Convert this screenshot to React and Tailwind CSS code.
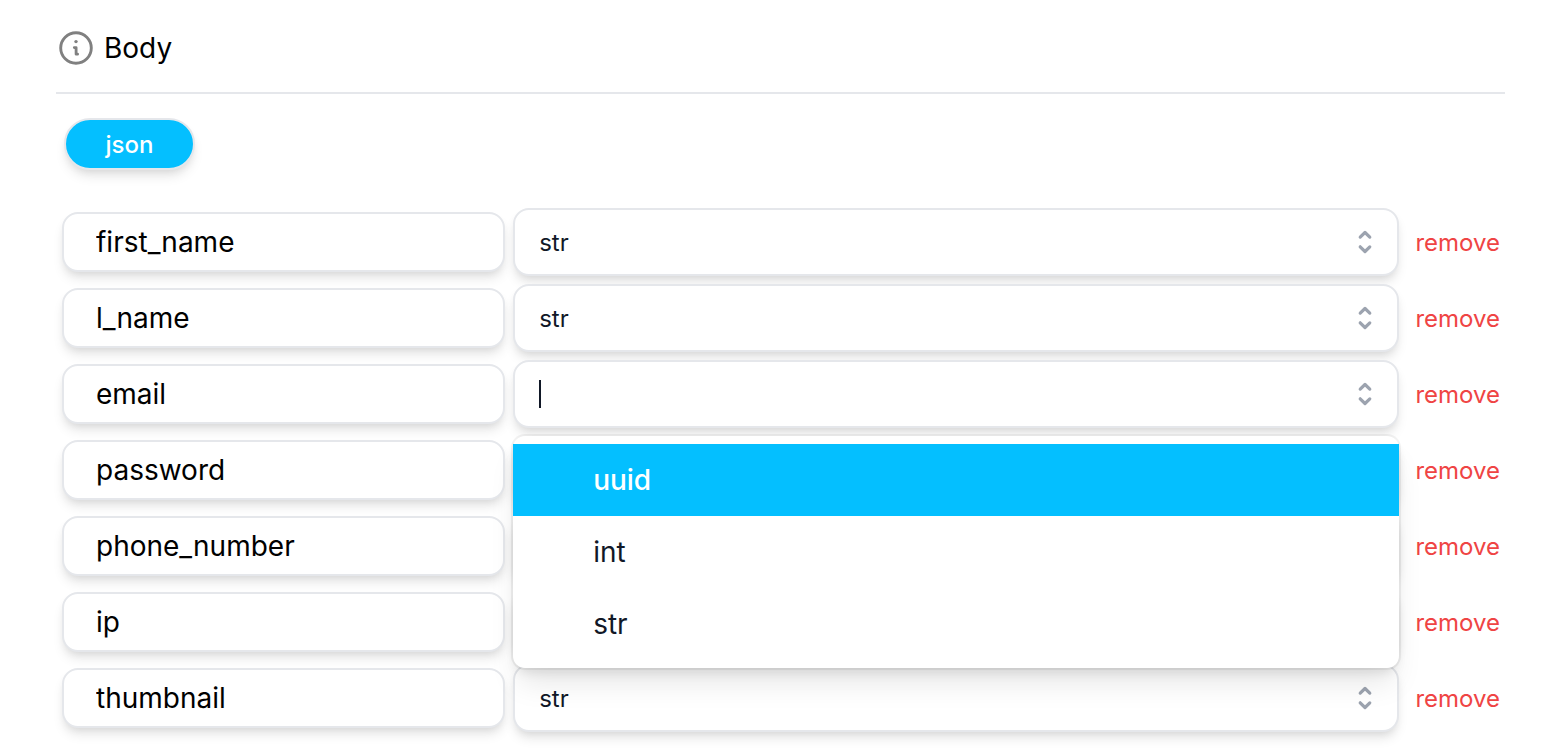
import { useState } from "react";

const FIELDS = [
  { name: "first_name", type: "str" },
  { name: "l_name", type: "str" },
  { name: "email", type: "", open: true },
  { name: "password", type: "str" },
  { name: "phone_number", type: "str" },
  { name: "ip", type: "str" },
  { name: "thumbnail", type: "str" },
];

const TYPES = ["uuid", "int", "str"];

const CARD_SHADOW =
  "shadow-[0_8px_12px_-2px_rgba(0,0,0,0.1),0_4px_8px_-4px_rgba(0,0,0,0.1)]";

function InfoIcon() {
  return (
    <svg viewBox="0 0 34 34" className="size-[34px]" fill="none" stroke="#808080" aria-hidden="true">
      <circle cx="17" cy="17" r="15.3" strokeWidth="2.9" />
      <path d="M15.3 16.6H17.1v6.6H18.6" strokeWidth="2.8" strokeLinecap="round" strokeLinejoin="round" />
      <circle cx="17" cy="10.6" r="1.7" fill="#808080" stroke="none" />
    </svg>
  );
}

function SelectorIcon() {
  return (
    <svg viewBox="0 0 20 20" className="size-8" fill="#9ca3af" aria-hidden="true">
      <path
        fillRule="evenodd"
        clipRule="evenodd"
        d="M10 3a1 1 0 01.707.293l3 3a1 1 0 01-1.414 1.414L10 5.414 7.707 7.707a1 1 0 01-1.414-1.414l3-3A1 1 0 0110 3zm-3.707 9.293a1 1 0 011.414 0L10 14.586l2.293-2.293a1 1 0 011.414 1.414l-3 3a1 1 0 01-1.414 0l-3-3a1 1 0 010-1.414z"
      />
    </svg>
  );
}

function TypeOptions({ id }) {
  const [active, setActive] = useState("uuid");
  return (
    <ul
      id={id}
      role="listbox"
      className="absolute inset-x-0 top-full z-10 mt-2 rounded-xl bg-white py-2 shadow-[0_0_0_2px_rgba(0,0,0,0.05),0_20px_30px_-6px_rgba(0,0,0,0.1),0_8px_12px_-4px_rgba(0,0,0,0.1)]"
    >
      {TYPES.map((type) => (
        <li
          key={type}
          role="option"
          aria-selected={type === active}
          onMouseEnter={() => setActive(type)}
          className={
            type === active
              ? "bg-[#04bfff] py-4 pr-8 pl-20 text-[28px] leading-10 font-medium text-white"
              : "py-4 pr-8 pl-20 text-[28px] leading-10 text-[#111827]"
          }
        >
          {type}
        </li>
      ))}
    </ul>
  );
}

function TypeBox({ field }) {
  const listId = `${field.name}-types`;
  return (
    <div className="relative min-w-0">
      <div className={`flex h-[68px] items-center rounded-2xl border-2 border-[#e5e7eb] bg-white pr-4 pl-6 ${CARD_SHADOW}`}>
        {field.open && <span className="h-7 w-[2px] bg-[#111827]" aria-hidden="true" />}
        <input
          role="combobox"
          aria-label={`${field.name} type`}
          aria-expanded={Boolean(field.open)}
          aria-controls={listId}
          defaultValue={field.type}
          className="min-w-0 flex-1 bg-transparent pt-[2px] text-2xl leading-10 text-[#111827] outline-none"
        />
        <button type="button" aria-label={`Show types for ${field.name}`}>
          <SelectorIcon />
        </button>
      </div>
      {field.open && <TypeOptions id={listId} />}
    </div>
  );
}

export default function App() {
  return (
    <main className="bg-white pt-6 pr-[51px] pb-4 pl-14 font-['Inter',sans-serif] text-black">
      <header className="flex h-[70px] items-start gap-[11px] border-b-2 border-[#e5e7eb] pt-[7px] pl-[3px]">
        <InfoIcon />
        <h2 className="text-[28px] leading-[34px]">Body</h2>
      </header>
      <div className="pt-6 pl-2">
        <button
          type="button"
          className={`h-[52px] w-[131px] rounded-full border-2 border-[#e5e7eb] bg-[#04bfff] pt-[2px] text-2xl font-medium text-white ${CARD_SHADOW}`}
        >
          json
        </button>
      </div>
      <form className="flex flex-col gap-2 pt-[38px] pr-[5px] pl-[6px]">
        {FIELDS.map((field) => (
          <div key={field.name} className="flex items-center">
            <div className="grid min-w-0 flex-1 grid-cols-[minmax(0,1fr)_minmax(0,2fr)] items-center gap-2">
              <input
                aria-label="Field name"
                defaultValue={field.name}
                className={`h-[60px] w-full min-w-0 rounded-2xl border-2 border-[#e5e7eb] bg-white px-8 text-[28px] outline-none ${CARD_SHADOW}`}
              />
              <TypeBox field={field} />
            </div>
            <button type="button" className="ml-4 pt-[2px] text-2xl text-[#ef4444]">
              remove
            </button>
          </div>
        ))}
      </form>
    </main>
  );
}
